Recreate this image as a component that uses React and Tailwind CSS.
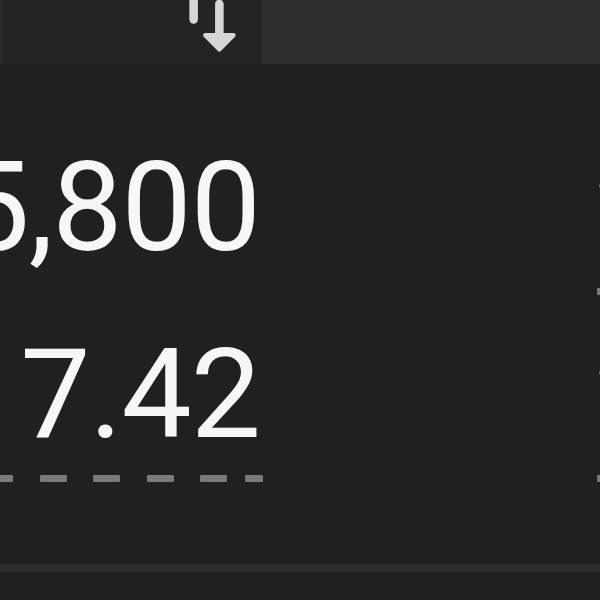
const SortIcon = ({ className }) => (
  <svg viewBox="0 0 24 24" className={className} fill="none">
    {/* up arrow, head clipped by the page top */}
    <path d="M9 4v9.6" stroke="currentColor" strokeWidth="2" strokeLinecap="round" />
    <path d="M5.5 7.5 9 3.5l3.5 4z" fill="currentColor" stroke="currentColor" strokeWidth="1" strokeLinejoin="round" />
    {/* down arrow */}
    <path d="M15 10v7.5" stroke="currentColor" strokeWidth="2" strokeLinecap="round" />
    <path d="M11.7 17.3h6.6L15 20.6z" fill="currentColor" stroke="currentColor" strokeWidth="1" strokeLinejoin="round" />
  </svg>
);

const Dashes = ({ items }) => (
  <div className="relative h-[7px]">
    {items.map(([left, width], i) => (
      <span
        key={i}
        className="absolute top-0 h-[7px] bg-[#7a7a7a] rounded-[1px]"
        style={{ left, width }}
      />
    ))}
  </div>
);

const col1Dashes = [
  [-14, 27],
  [40, 27],
  [93, 27],
  [147, 27],
  [200, 27],
  [245, 18],
];

const col3Dashes = [
  [3, 27],
  [57, 27],
  [111, 27],
];

const Value = ({ children, align = 'right' }) => (
  <div
    className={
      align === 'right'
        ? 'h-[126px] text-[125px] leading-[126px] tracking-[-1px] text-[#f7f7f7] whitespace-nowrap flex justify-end pr-[2px]'
        : 'h-[126px] text-[125px] leading-[126px] tracking-[-1px] text-[#f7f7f7] whitespace-nowrap flex justify-start'
    }
  >
    <span className="shrink-0">{children}</span>
  </div>
);

export default function App() {
  return (
    <div className="w-[600px] h-[600px] overflow-hidden bg-[#202020] font-['Roboto',sans-serif]">
      {/* header row */}
      <div className="flex h-[64px]">
        <div className="w-[262px] shrink-0 bg-[#242424] border-l-[3px] border-[#2b2b2b] flex justify-end items-end pr-[4px]">
          <SortIcon className="w-[103px] h-[103px] shrink-0 text-[#d6d6d6]" />
        </div>
        <div className="flex-1 bg-[#2f2f2f]" />
      </div>

      {/* body */}
      <div className="flex h-[500px] pt-[81px]">
        <div className="w-[262px] shrink-0 flex flex-col">
          <Value>5,800</Value>
          <div className="mt-[17px] h-[7px]" />
          <div className="mt-[37px]">
            <Value>7.42</Value>
          </div>
          <div className="mt-[17px] w-[263px] overflow-hidden">
            <Dashes items={col1Dashes} />
          </div>
        </div>
        <div className="w-[332px] shrink-0" />
        <div className="flex-1 flex flex-col overflow-hidden">
          <Value align="left">2,140</Value>
          <div className="mt-[17px]">
            <Dashes items={col3Dashes} />
          </div>
          <div className="mt-[37px]">
            <Value align="left">2.65</Value>
          </div>
          <div className="mt-[17px]">
            <Dashes items={col3Dashes} />
          </div>
        </div>
      </div>

      <div className="h-[8px] bg-[#2e2e2e]" />
    </div>
  );
}
